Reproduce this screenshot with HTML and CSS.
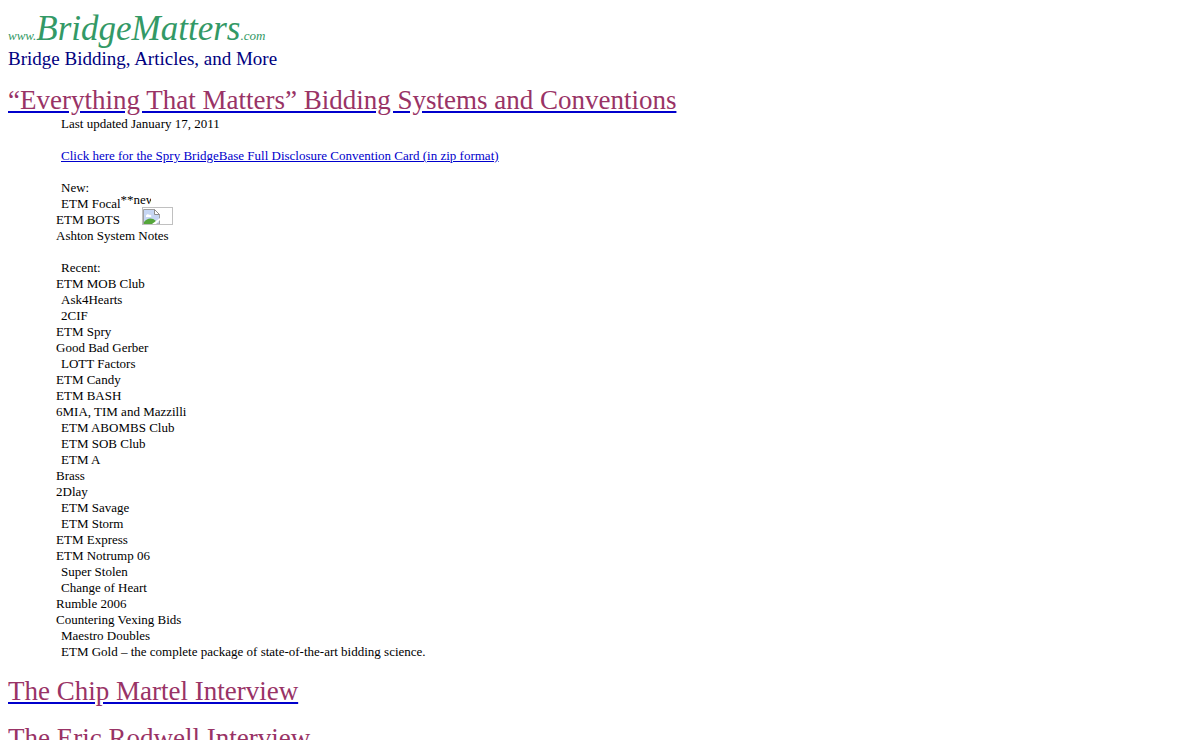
FILE: index.html
```html
<!DOCTYPE html>
<html lang="en">
<head>
    <meta charset="UTF-8">
    <meta name="viewport" content="width=device-width, initial-scale=1.0">
    <title>BridgeMatters</title>
    <link rel="stylesheet" href="styles.css">
</head>
<body>
    <header>
        <div class="logo"><small>www.</small>BridgeMatters<small>.com</small></div>
        <div class="tagline">Bridge Bidding, Articles, and More</div>
    </header>

    <h1 class="title"><a href="#systems">“Everything That Matters” Bidding Systems and Conventions</a></h1>
    <div class="systems" id="systems">
        <p class="indent">Last updated January 17, 2011</p>
        <p class="indent gap"><a href="#card">Click here for the Spry BridgeBase Full Disclosure Convention Card (in zip format)</a></p>

        <p class="indent gap">New:</p>
        <ul>
            <li class="indent"><span class="item">ETM Focal<span class="new">**new</span></span></li>
            <li><span class="item">ETM BOTS
                <!-- missing picture -->
                <svg class="missing" width="31" height="18" viewBox="0 0 31 18">
                    <rect x="0.5" y="0.5" width="30" height="17" fill="#fff" stroke="#c0c0c0"/>
                    <path d="M1.5 17V2.5h11l5 5V17z" fill="#c6d6f3" stroke="#a0a0a0"/>
                    <path d="M4 9c0-2 3-2 3-1 2-1 3 1 2 2H4z" fill="#fff"/>
                    <path d="M2 17v-2c3-4 8-5 12-1l-2 3z" fill="#55a63a"/>
                    <path d="M12.5 2.5v5h5z" fill="#fff" stroke="#8e8e8e"/>
                    <path d="M10 17l8-6v2l-4 4z" fill="#fff"/>
                    <path d="M1 17.5h30" stroke="#c0c0c0"/>
                </svg></span></li>
            <li>Ashton System Notes</li>
        </ul>

        <p class="indent gap">Recent:</p>
        <ul>
            <li>ETM MOB Club</li>
            <li class="indent">Ask4Hearts</li>
            <li class="indent">2CIF</li>
            <li>ETM Spry</li>
            <li>Good Bad Gerber</li>
            <li class="indent">LOTT Factors</li>
            <li>ETM Candy</li>
            <li>ETM BASH</li>
            <li>6MIA, TIM and Mazzilli</li>
            <li class="indent">ETM ABOMBS Club</li>
            <li class="indent">ETM SOB Club</li>
            <li class="indent">ETM A</li>
            <li>Brass</li>
            <li>2Dlay</li>
            <li class="indent">ETM Savage</li>
            <li class="indent">ETM Storm</li>
            <li>ETM Express</li>
            <li>ETM Notrump 06</li>
            <li class="indent">Super Stolen</li>
            <li class="indent">Change of Heart</li>
            <li>Rumble 2006</li>
            <li>Countering Vexing Bids</li>
            <li class="indent">Maestro Doubles</li>
            <li class="indent">ETM Gold – the complete package of state-of-the-art bidding science.</li>
        </ul>
    </div>

    <h1 class="title"><a href="#martel">The Chip Martel Interview</a></h1>
    <h1 class="title"><a href="#rodwell">The Eric Rodwell Interview</a></h1>
</body>
</html>
```
FILE: styles.css
```css
body {
    font-family: "Liberation Serif", "Times New Roman", serif;
    font-size: 13px;
    line-height: 16px;
    margin: 8px;
    background-color: #fff;
    color: #000;
}
.logo {
    font-size: 35px;
    line-height: 41px;
    font-style: italic;
    color: #339966;
}
.logo small {
    font-size: 13px;
    line-height: 16px;
}
.tagline {
    font-size: 19px;
    line-height: 20px;
    color: #000080;
}
.title {
    margin: 16px 0 0;
    font-size: 27px;
    line-height: 31px;
    font-weight: normal;
}
.title a {
    color: #993366;
    text-decoration-color: #0000cc;
}
.systems {
    padding-left: 48px;
}
.systems p,
.systems ul {
    margin: 0;
    padding: 0;
    list-style: none;
}
.systems a {
    color: #0000cc;
}
.systems .indent {
    padding-left: 5px;
}
.systems .gap {
    margin-top: 16px;
}
.item {
    position: relative;
}
/* clipped marker hanging off the end of the line */
.new {
    position: absolute;
    left: 100%;
    top: -4px;
    width: 30px;
    overflow: hidden;
}
.missing {
    position: absolute;
    left: 86px;
    top: -5px;
}
```
